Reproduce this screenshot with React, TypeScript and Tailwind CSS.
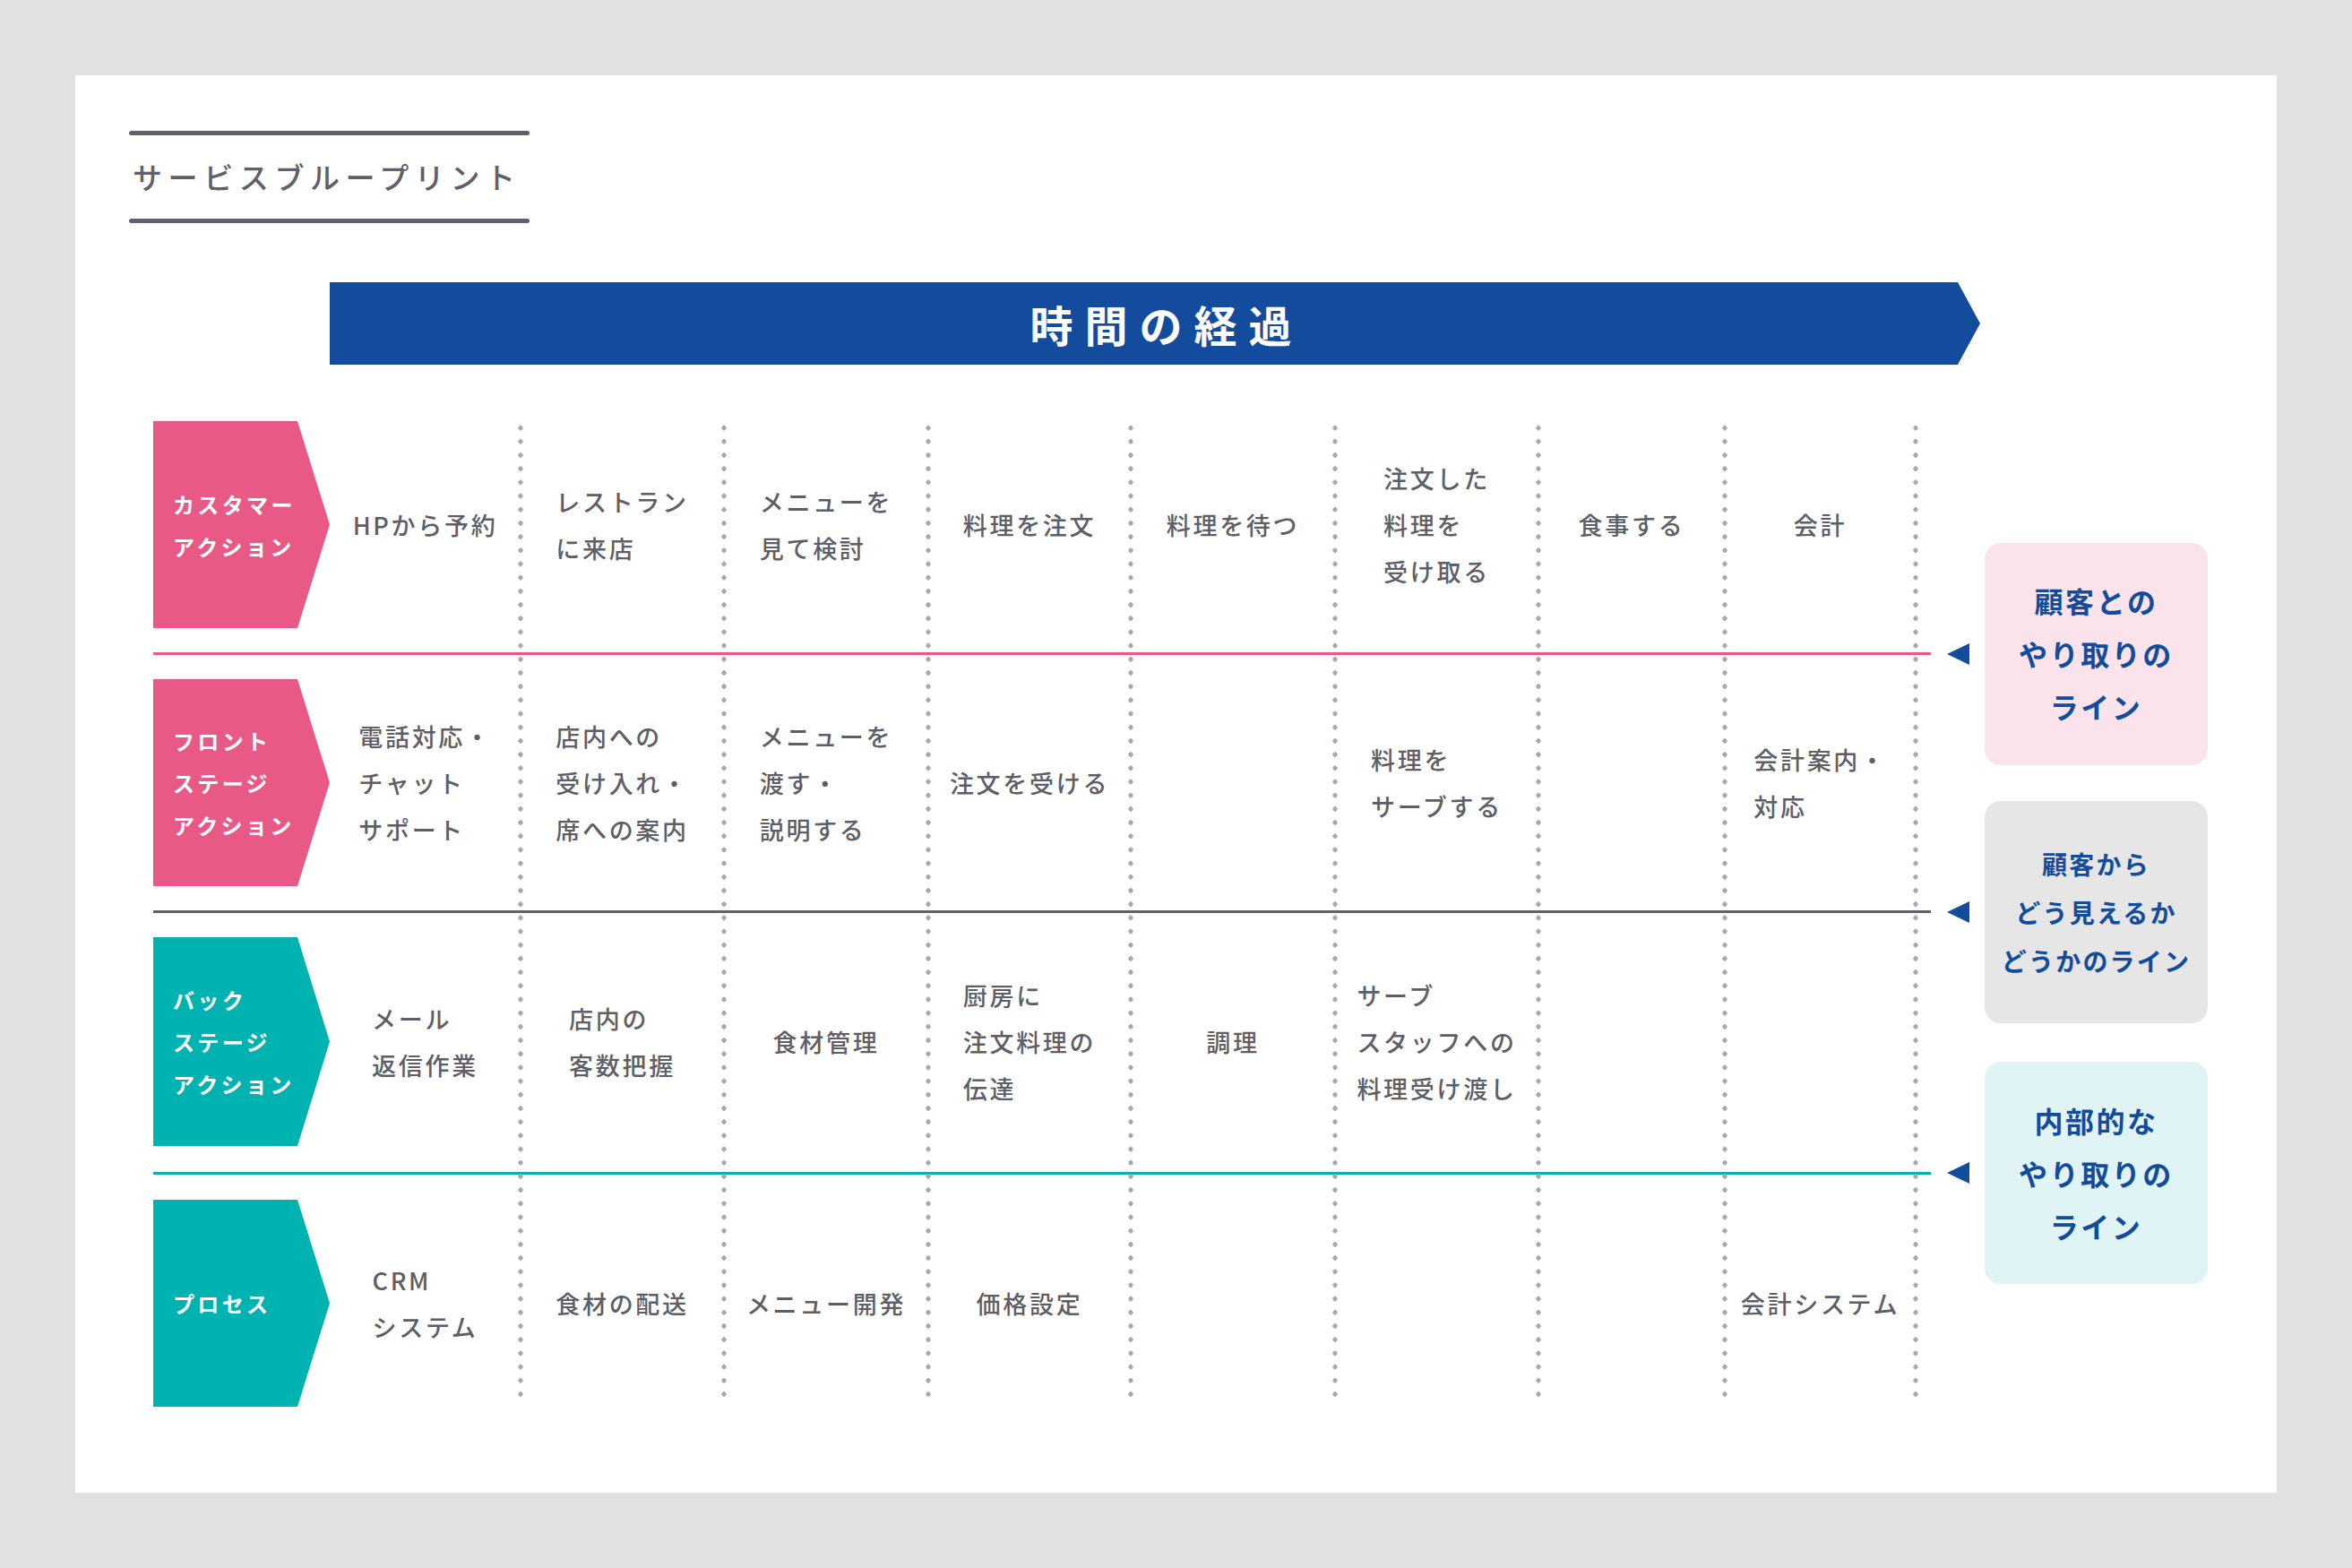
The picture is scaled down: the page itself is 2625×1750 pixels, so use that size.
import React from "react";

const F = { fontFamily: '"Noto Sans CJK JP", "Noto Sans", sans-serif' };

const cols = [
  ["HPから予約", "レストラン\nに来店", "メニューを\n見て検討", "料理を注文", "料理を待つ", "注文した\n料理を\n受け取る", "食事する", "会計"],
  ["電話対応・\nチャット\nサポート", "店内への\n受け入れ・\n席への案内", "メニューを\n渡す・\n説明する", "注文を受ける", "", "料理を\nサーブする", "", "会計案内・\n対応"],
  ["メール\n返信作業", "店内の\n客数把握", "食材管理", "厨房に\n注文料理の\n伝達", "調理", "サーブ\nスタッフへの\n料理受け渡し", "", ""],
  ["CRM\nシステム", "食材の配送", "メニュー開発", "価格設定", "", "", "", "会計システム"],
];
const labels: [string, string][] = [
  ["カスタマー\nアクション", "bg-[#e85a85]"],
  ["フロント\nステージ\nアクション", "bg-[#e85a85]"],
  ["バック\nステージ\nアクション", "bg-[#00b3b0]"],
  ["プロセス", "bg-[#00b3b0]"],
];
const rowStarts = ["row-start-1", "row-start-3", "row-start-5", "row-start-7"];
const colStarts = ["col-start-2", "col-start-3", "col-start-4", "col-start-5", "col-start-6", "col-start-7", "col-start-8", "col-start-9"];
const lineRows = ["row-start-2", "row-start-4", "row-start-6"];
const lineColors = ["bg-[#e85a85]", "bg-[#5f6069]", "bg-[#00b3b0]"];
const boxes: [string, string, string][] = [
  ["顧客との\nやり取りの\nライン", "bg-[#fae3ea]", "text-[32px] leading-[59px]"],
  ["顧客から\nどう見えるか\nどうかのライン", "bg-[#e6e6e7]", "text-[28px] leading-[54px]"],
  ["内部的な\nやり取りの\nライン", "bg-[#e0f4f5]", "text-[32px] leading-[59px]"],
];

function Lines({ t }: { t: string }) {
  return <>{t.split("\n").map((l, i) => <div key={i}>{l}</div>)}</>;
}

export default function App() {
  return (
    <div style={F} className="w-[2625px] h-[1750px] bg-[#e0e1e3] p-[84px]">
      <div className="bg-white h-[1582px] flex flex-col">
        <div className="ml-[60px] mt-[62px] w-[447px] flex flex-col">
          <div className="h-[5px] rounded-full bg-[#5f6069]" />
          <div className="h-[93px] flex items-center pl-[4px] text-[33px] tracking-[0.2em] font-medium text-[#5f6069]">サービスブループリント</div>
          <div className="h-[5px] rounded-full bg-[#5f6069]" />
        </div>
        <div className="ml-[284px] mt-[66px] w-[1842px] h-[92px] bg-[#134c9c] [clip-path:polygon(0_0,1817px_0,100%_50%,1817px_100%,0_100%)] flex items-center justify-center pl-[26px] text-white text-[48px] font-bold tracking-[0.27em]">
          時間の経過
        </div>
        <div className="ml-[87px] mt-[63px] grid grid-cols-[197px_213px_227px_228px_226px_228px_227px_208px_213px_17px_18px_25px_17px_249px] grid-rows-[231px_57px_231px_57px_233px_60px_231px]">
          {labels.map(([t, c], r) => (
            <div key={"l" + r} className={`col-start-1 ${rowStarts[r]} ${c} [clip-path:polygon(0_0,161px_0,100%_50%,161px_100%,0_100%)] flex flex-col justify-center pl-[22px] text-white font-bold text-[24px] tracking-[0.14em] leading-[47px]`}>
              <Lines t={t} />
            </div>
          ))}
          {cols.map((row, r) =>
            row.map((t, c) => (
              <div key={r + "-" + c} className={`${colStarts[c]} ${rowStarts[r]} flex items-center justify-center`}>
                <div className="text-left text-[27px] font-medium tracking-[0.1em] leading-[52px] text-[#5d5e66]">
                  <Lines t={t} />
                </div>
              </div>
            ))
          )}
          {lineRows.map((lr, i) => (
            <React.Fragment key={lr}>
              <div className={`col-start-1 col-span-10 ${lr} self-center h-[3px] ${lineColors[i]}`} />
              <div className={`col-start-12 ${lr} flex items-center justify-center`}>
                <svg width="25" height="24" viewBox="0 0 25 24"><polygon points="0,12 25,0 25,24" fill="#134c9c" /></svg>
              </div>
              <div className={`col-start-14 ${lr} flex items-center`}>
                <div className={`shrink-0 w-[249px] h-[248px] rounded-[18px] ${boxes[i][1]} flex flex-col items-center justify-center text-[#134c9c] font-bold tracking-[0.08em] ${boxes[i][2]}`}>
                  <Lines t={boxes[i][0]} />
                </div>
              </div>
            </React.Fragment>
          ))}
          {colStarts.map((cs) => (
            <div key={"d" + cs} className={`${cs} row-start-1 row-span-7 justify-self-end translate-x-[3px] w-[6px] h-[1090px] bg-[radial-gradient(circle,#a9a9ac_2.4px,transparent_2.9px)] bg-[length:6px_15.2px] bg-repeat-y`} />
          ))}
        </div>
      </div>
    </div>
  );
}
